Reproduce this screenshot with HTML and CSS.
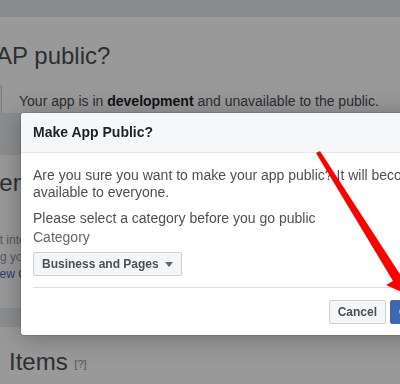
FILE: index.html
```html
<!DOCTYPE html>
<html lang="en">
<head>
    <meta charset="UTF-8">
    <meta name="viewport" content="width=device-width, initial-scale=1.0">
    <title>Make App Public</title>
    <link rel="stylesheet" href="styles.css">
</head>
<body>
    <div class="page">
        <div class="topbar"></div>

        <div class="card card-status">
            <h2 class="status-title">Make AP public?</h2>
            <div class="status-row">
                <div class="toggle"></div>
                <p class="status-text">Your app is in <b>development</b> and unavailable to the public.</p>
            </div>
        </div>

        <div class="card card-review">
            <h2 class="review-title">Items in Review</h2>
            <div class="review-line line-1">most integrations need review before use</div>
            <div class="review-line line-2">using your app with people</div>
            <div class="review-line line-3"><a href="#">View Checklist</a></div>
        </div>

        <div class="card card-items">
            <h2 class="items-title">Items <span class="help">[?]</span></h2>
        </div>
    </div>

    <!-- dim layer behind the dialog -->
    <div class="overlay"></div>

    <div class="dialog">
        <div class="dialog-header">Make App Public?</div>
        <div class="dialog-body">
            <p class="confirm">Are you sure you want to make your app public? It will become available to everyone.</p>
            <p class="hint">Please select a category before you go public</p>
            <div class="label">Category</div>
            <button class="select">Business and Pages <span class="caret"></span></button>
        </div>
        <div class="dialog-footer">
            <button class="btn">Cancel</button>
            <button class="btn btn-primary">Confirm</button>
        </div>
    </div>

    <!-- red annotation arrow -->
    <svg class="arrow" width="400" height="384" viewBox="0 0 400 384">
        <path d="M316,153 L320,151 L420,305 L402,292 L386,285 L393,281 Z" fill="#ff0000"/>
    </svg>
</body>
</html>
```

FILE: styles.css
```css
body {
    margin: 0;
    width: 400px;
    height: 384px;
    overflow: hidden;
    background-color: #e9ebee;
    font-family: "Liberation Sans", Arial, sans-serif;
    color: #4b4f56;
}

.page {
    width: 400px;
}

.topbar {
    height: 17px;
    background-color: #e6e8eb;
}

.card {
    background-color: #fff;
    overflow: hidden;
    white-space: nowrap;
}

h2 {
    margin: 0;
    font-size: 24px;
    line-height: 28px;
    font-weight: normal;
    color: #4b4f56;
}

/* first card: app status */
.card-status {
    height: 96px;
    padding-top: 25px;
    box-sizing: border-box;
}

.status-title {
    margin-left: -68px;
}

.status-row {
    display: flex;
    margin-top: 15px;
}

.toggle {
    width: 50px;
    height: 30px;
    margin-left: -48px;
    box-sizing: border-box;
    border: 1px solid #ccd0d5;
    border-radius: 2px;
    background-color: #f5f6f7;
    flex-shrink: 0;
}

.status-text {
    margin: 0 0 0 17px;
    font-size: 14px;
    line-height: 33px;
}

.status-text b {
    color: #1d2129;
}

/* second card */
.card-review {
    margin-top: 42px;
    height: 153px;
    padding-top: 14px;
    box-sizing: border-box;
}

.review-title {
    margin-left: -14px;
}

.review-line {
    font-size: 12px;
    line-height: 17px;
    color: #90949c;
}

.line-1 {
    margin-top: 35px;
    margin-left: -23px;
}

.line-2 {
    margin-left: -22px;
}

.line-3 {
    margin-left: -11px;
}

.review-line a {
    color: #4267b2;
    text-decoration: none;
}

/* third card */
.card-items {
    margin-top: 19px;
    height: 80px;
    padding: 21px 0 0 9px;
    box-sizing: border-box;
}

.help {
    font-size: 11px;
    color: #90949c;
    vertical-align: 2px;
}

.overlay {
    position: fixed;
    top: 0;
    left: 0;
    width: 100%;
    height: 100%;
    background-color: rgba(0, 0, 0, 0.4);
}

/* dialog */
.dialog {
    position: absolute;
    top: 113px;
    left: 21px;
    width: 445px;
    background-color: #fff;
    border-radius: 3px;
    box-shadow: 0 2px 26px rgba(0, 0, 0, 0.3), 0 0 0 1px rgba(0, 0, 0, 0.1);
    overflow: hidden;
}

.dialog-header {
    height: 39px;
    line-height: 39px;
    padding: 0 12px;
    background-color: #f6f7f9;
    border-bottom: 1px solid #e5e5e5;
    font-size: 14px;
    font-weight: bold;
    color: #1d2129;
}

.dialog-body {
    padding: 14px 12px 11px;
    font-size: 14px;
    line-height: 17px;
}

.dialog-body p {
    margin: 0;
}

.hint {
    margin-top: 9px !important;
}

.label {
    margin-top: 2px;
    color: #606770;
}

.select {
    display: flex;
    align-items: center;
    margin-top: 6px;
    height: 24px;
    padding: 0 8px;
    white-space: nowrap;
    border: 1px solid #ccd0d5;
    border-radius: 2px;
    background-color: #f5f6f7;
    font-family: inherit;
    font-size: 12px;
    font-weight: bold;
    color: #4b4f56;
}

.caret {
    width: 0;
    height: 0;
    margin-left: 6px;
    margin-top: 1px;
    border-left: 4.5px solid transparent;
    border-right: 4.5px solid transparent;
    border-top: 5px solid #606770;
}

.dialog-footer {
    display: flex;
    justify-content: flex-end;
    gap: 4px;
    margin: 0 12px;
    padding: 12px 0 11px;
    border-top: 1px solid #dddfe2;
}

.btn {
    height: 24px;
    padding: 0 8px;
    white-space: nowrap;
    border: 1px solid #ccd0d5;
    border-radius: 2px;
    background-color: #f5f6f7;
    font-family: inherit;
    font-size: 12px;
    font-weight: bold;
    color: #4b4f56;
}

.btn-primary {
    background-color: #4267b2;
    border-color: #4267b2;
    color: #fff;
}

.arrow {
    position: absolute;
    top: 0;
    left: 0;
}
```
